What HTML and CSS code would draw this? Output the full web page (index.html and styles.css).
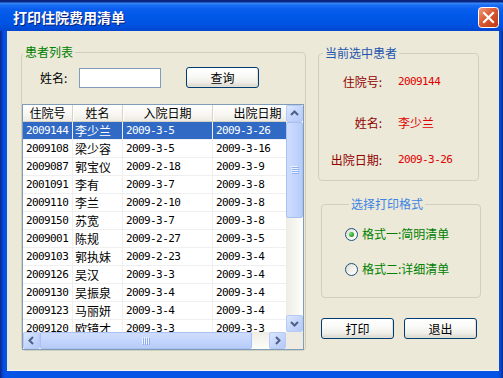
FILE: index.html
```html
<!DOCTYPE html>
<html>
<head>
<meta charset="utf-8">
<link rel="stylesheet" href="styles.css">
</head>
<body>
<div class="window">
  <div class="titlebar">
    <span class="title">打印住院费用清单</span>
    <span class="close">
      <svg width="21" height="21" viewBox="0 0 21 21">
        <defs>
          <linearGradient id="cg" x1="0" y1="0" x2="1" y2="1">
            <stop offset="0" stop-color="#F0A080"/>
            <stop offset="0.45" stop-color="#DC5A34"/>
            <stop offset="1" stop-color="#B8380F"/>
          </linearGradient>
        </defs>
        <rect x="0.5" y="0.5" width="20" height="20" rx="3" fill="url(#cg)" stroke="#FFFFFF"/>
        <path d="M6 6 L15 15 M15 6 L6 15" stroke="#FFFFFF" stroke-width="2.2" stroke-linecap="square"/>
      </svg>
    </span>
  </div>
  <div class="client">
    <fieldset class="group group-list">
      <legend class="legend legend-green">患者列表</legend>
      <div class="search-row">
        <span class="search-label">姓名:</span>
        <span class="textbox"></span>
        <span class="btn btn-query">查询</span>
      </div>
      <div class="listview">
        <div class="lv-main">
          <div class="lv-header">
            <span class="hcell c1">住院号</span>
            <span class="hcell c2">姓名</span>
            <span class="hcell c3">入院日期</span>
            <span class="hcell c4">出院日期</span>
          </div>
          <div class="lv-row selected"><span class="cell c1 num">2009144</span><span class="cell c2">李少兰</span><span class="cell c3 num">2009-3-5</span><span class="cell c4 num">2009-3-26</span></div>
          <div class="lv-row"><span class="cell c1 num">2009108</span><span class="cell c2">梁少容</span><span class="cell c3 num">2009-3-5</span><span class="cell c4 num">2009-3-16</span></div>
          <div class="lv-row"><span class="cell c1 num">2009087</span><span class="cell c2">郭宝仪</span><span class="cell c3 num">2009-2-18</span><span class="cell c4 num">2009-3-9</span></div>
          <div class="lv-row"><span class="cell c1 num">2001091</span><span class="cell c2">李有</span><span class="cell c3 num">2009-3-7</span><span class="cell c4 num">2009-3-8</span></div>
          <div class="lv-row"><span class="cell c1 num">2009110</span><span class="cell c2">李兰</span><span class="cell c3 num">2009-2-10</span><span class="cell c4 num">2009-3-8</span></div>
          <div class="lv-row"><span class="cell c1 num">2009150</span><span class="cell c2">苏宽</span><span class="cell c3 num">2009-3-7</span><span class="cell c4 num">2009-3-8</span></div>
          <div class="lv-row"><span class="cell c1 num">2009001</span><span class="cell c2">陈规</span><span class="cell c3 num">2009-2-27</span><span class="cell c4 num">2009-3-5</span></div>
          <div class="lv-row"><span class="cell c1 num">2009103</span><span class="cell c2">郭执妹</span><span class="cell c3 num">2009-2-23</span><span class="cell c4 num">2009-3-4</span></div>
          <div class="lv-row"><span class="cell c1 num">2009126</span><span class="cell c2">吴汉</span><span class="cell c3 num">2009-3-3</span><span class="cell c4 num">2009-3-4</span></div>
          <div class="lv-row"><span class="cell c1 num">2009130</span><span class="cell c2">吴振泉</span><span class="cell c3 num">2009-3-4</span><span class="cell c4 num">2009-3-4</span></div>
          <div class="lv-row"><span class="cell c1 num">2009123</span><span class="cell c2">马丽妍</span><span class="cell c3 num">2009-3-4</span><span class="cell c4 num">2009-3-4</span></div>
          <div class="lv-row"><span class="cell c1 num">2009120</span><span class="cell c2">欧镜才</span><span class="cell c3 num">2009-3-3</span><span class="cell c4 num">2009-3-3</span></div>
        </div>
        <div class="vscroll">
          <span class="sbtn"><svg width="15" height="15" viewBox="0 0 15 15"><polyline points="4,9 7.5,5.5 11,9" fill="none" stroke="#4D6185" stroke-width="2"/></svg></span>
          <span class="vthumb"><svg width="8" height="8" viewBox="0 0 8 8"><path d="M0 0.5H7M0 2.5H7M0 4.5H7M0 6.5H7" stroke="#EEF4FE" stroke-width="1"/><path d="M1 1.5H8M1 3.5H8M1 5.5H8M1 7.5H8" stroke="#8CB0F8" stroke-width="1"/></svg></span>
          <span class="vtrack"></span>
          <span class="sbtn"><svg width="15" height="15" viewBox="0 0 15 15"><polyline points="4,6 7.5,9.5 11,6" fill="none" stroke="#4D6185" stroke-width="2"/></svg></span>
        </div>
        <div class="hscroll">
          <span class="sbtn"><svg width="15" height="15" viewBox="0 0 15 15"><polyline points="9,4 5.5,7.5 9,11" fill="none" stroke="#4D6185" stroke-width="2"/></svg></span>
          <span class="hthumb"><svg width="8" height="8" viewBox="0 0 8 8"><path d="M0.5 0V7M2.5 0V7M4.5 0V7M6.5 0V7" stroke="#EEF4FE" stroke-width="1"/><path d="M1.5 1V8M3.5 1V8M5.5 1V8M7.5 1V8" stroke="#8CB0F8" stroke-width="1"/></svg></span>
          <span class="htrack"></span>
          <span class="sbtn"><svg width="15" height="15" viewBox="0 0 15 15"><polyline points="6,4 9.5,7.5 6,11" fill="none" stroke="#4D6185" stroke-width="2"/></svg></span>
        </div>
        <div class="corner"></div>
      </div>
    </fieldset>

    <div class="side">
      <fieldset class="group group-info">
        <legend class="legend legend-blue">当前选中患者</legend>
        <div class="info-row row-a"><span class="info-label">住院号:</span><span class="info-value num">2009144</span></div>
        <div class="info-row row-b"><span class="info-label">姓名:</span><span class="info-value">李少兰</span></div>
        <div class="info-row row-c"><span class="info-label">出院日期:</span><span class="info-value num">2009-3-26</span></div>
      </fieldset>

      <fieldset class="group group-format">
        <legend class="legend legend-light">选择打印格式</legend>
        <div class="radio-row row-a"><span class="radio"><span class="dot"></span></span><span class="radio-text">格式一:简明清单</span></div>
        <div class="radio-row row-b"><span class="radio"></span><span class="radio-text">格式二:详细清单</span></div>
      </fieldset>

      <div class="buttons">
        <span class="btn btn-print">打印</span>
        <span class="btn btn-exit">退出</span>
      </div>
    </div>
  </div>
</div>
</body>
</html>
```

FILE: styles.css
```css
* { box-sizing: border-box; }
html, body { margin: 0; padding: 0; }
body {
  width: 503px;
  height: 378px;
  overflow: hidden;
  background: #0A246A;
  font-family: "Noto Sans CJK SC", sans-serif;
  font-size: 12px;
  color: #000;
}
.window {
  width: 503px;
  height: 378px;
  display: flex;
  flex-direction: column;
  background: linear-gradient(to right, #0A2C8C 0, #0A2C8C 1px, #0541CF 2px, #0654E6 5px, #0654E6 498px, #0544CF 501px, #0A2C8C 503px);
}
.titlebar {
  height: 31px;
  flex: none;
  display: flex;
  align-items: center;
  justify-content: space-between;
  padding: 3px 4px 0 13px;
  background: linear-gradient(to bottom, #0A2680 0, #0A2680 2px, #3A8CF8 3px, #1A6EF5 5px, #0A5EEE 9px, #0058E8 16px, #0053E2 24px, #004AD6 29px, #0645CC 31px);
}
.title {
  color: #FFFFFF;
  font-weight: bold;
  font-size: 14px;
  line-height: 16px;
  text-shadow: 1px 1px 0 #0A1E7A;
}
.close {
  display: flex;
  width: 21px;
  height: 21px;
}
.client {
  flex: 1;
  margin: 0 4px 7px 7px;
  background: #ECE9D8;
  display: flex;
  align-items: flex-start;
  box-shadow: inset 0 -1px 0 #F8F7F2;
}

/* group boxes */
.group {
  margin: 0;
  padding: 0;
  min-width: 0;
  border: 1px solid #D0D0BF;
  border-radius: 4px;
}
.legend {
  font-size: 12px;
  line-height: 14px;
  padding: 0 2px;
  margin-left: 4px;
}
.legend-green { color: #008000; margin-left: 1px; }
.legend-blue { color: #1E56B0; }
.legend-light { color: #3C84E4; }

.group-list {
  margin: 14px 0 0 14px;
  width: 285px;
  padding: 0 1px 0 0;
}
.search-row {
  display: flex;
  align-items: center;
  height: 21px;
  margin-top: 8px;
  padding-left: 18px;
}
.search-label {
  width: 39px;
  line-height: 14px;
}
.textbox {
  width: 82px;
  height: 20px;
  background: #FFFFFF;
  border: 1px solid #7F9DB9;
}
.btn {
  display: flex;
  align-items: center;
  justify-content: center;
  width: 73px;
  height: 21px;
  border: 1px solid #003C74;
  border-radius: 3px;
  background: linear-gradient(to bottom, #FFFFFF 0, #FAFAF8 40%, #EFEEE8 75%, #D8D4C8 100%);
  box-shadow: inset -1px -1px 0 #E3E0D5;
  line-height: 14px;
  padding-top: 1px;
}
.btn-query { margin-left: 25px; }

/* list view */
.listview {
  margin-top: 16px;
  width: 282px;
  height: 246px;
  border: 1px solid #7F9DB9;
  background: #FFFFFF;
  display: grid;
  grid-template-columns: 263px 17px;
  grid-template-rows: 227px 17px;
}
.lv-main {
  overflow: hidden;
  width: 263px;
}
.lv-header {
  display: flex;
  width: 280px;
  height: 17px;
  background: linear-gradient(to bottom, #FFFFFF 0, #F7F6F1 60%, #EDEBE2 100%);
  border-bottom: 1px solid #D5D2C4;
}
.hcell {
  flex: none;
  height: 16px;
  line-height: 16px;
  text-align: center;
  border-right: 1px solid #D8D5C6;
  box-shadow: 1px 0 0 #FFFFFF;
}
.c1 { width: 50px; }
.c2 { width: 50px; }
.c3 { width: 90px; }
.c4 { width: 90px; }
.lv-row {
  display: flex;
  width: 280px;
  height: 18px;
  border-bottom: 1px solid #EFEFEF;
}
.cell {
  flex: none;
  height: 17px;
  line-height: 17px;
  padding-left: 2px;
  border-right: 1px solid #EFEFEF;
  white-space: nowrap;
  overflow: hidden;
}
.num {
  font-family: "DejaVu Sans Mono", monospace;
  font-size: 11px;
  letter-spacing: -0.6px;
}
.cell.num { padding-left: 3px; }
.lv-row.selected {
  background: #316AC5;
  color: #FFFFFF;
}

/* scrollbars */
.vscroll {
  display: flex;
  flex-direction: column;
  background: linear-gradient(to right, #EEEDE5, #FDFDFA);
}
.hscroll {
  display: flex;
  background: linear-gradient(to bottom, #EEEDE5, #FDFDFA);
}
.corner { background: #EDEBE2; }
.sbtn {
  flex: none;
  width: 17px;
  height: 17px;
  display: flex;
  align-items: center;
  justify-content: center;
  border: 1px solid #B7CAF5;
  border-radius: 2px;
  background: linear-gradient(135deg, #DCE7FE 0, #C6D6FC 50%, #B5C9F8 100%);
}
.vthumb {
  flex: none;
  height: 96px;
  display: flex;
  align-items: center;
  justify-content: center;
  border: 1px solid #A9C0F3;
  border-radius: 2px;
  background: linear-gradient(to right, #CFDDFC 0, #C3D5FD 50%, #B8CCF9 100%);
}
.vtrack { flex: 1; }
.hthumb {
  flex: none;
  width: 212px;
  display: flex;
  align-items: center;
  justify-content: center;
  border: 1px solid #A9C0F3;
  border-radius: 2px;
  background: linear-gradient(to bottom, #CFDDFC 0, #C3D5FD 50%, #B8CCF9 100%);
}
.htrack { flex: 1; }

/* right side */
.side {
  margin-left: 12px;
  display: flex;
  flex-direction: column;
  align-items: flex-start;
}
.group-info {
  margin-top: 15px;
  width: 161px;
  padding: 0 0 13px 0;
}
.info-row {
  display: flex;
  align-items: center;
  height: 14px;
  line-height: 14px;
}
.group-info .row-a { margin-top: 15px; }
.group-info .row-b { margin-top: 27px; }
.group-info .row-c { margin-top: 23px; }
.info-label {
  width: 63px;
  text-align: right;
  color: #900000;
}
.info-value {
  margin-left: 16px;
  color: #E00000;
}

.group-format {
  margin: 16px 0 0 3px;
  width: 160px;
  padding: 0 0 21px 23px;
}
.radio-row {
  display: flex;
  align-items: center;
  height: 14px;
}
.group-format .row-a { margin-top: 16px; }
.group-format .row-b { margin-top: 21px; }
.radio {
  width: 13px;
  height: 13px;
  border-radius: 50%;
  border: 1px solid #1C5180;
  background: linear-gradient(135deg, #DCDBD3 0, #F4F3EE 55%, #FFFFFF 100%);
  display: flex;
  align-items: center;
  justify-content: center;
}
.dot {
  width: 5px;
  height: 5px;
  border-radius: 50%;
  background: radial-gradient(circle at 35% 35%, #7CE07C 0, #2FAE2F 50%, #1A8A1A 100%);
}
.radio-text {
  margin-left: 4px;
  color: #008000;
  line-height: 14px;
}
.buttons {
  margin: 20px 0 0 3px;
  display: flex;
  gap: 10px;
}
```
